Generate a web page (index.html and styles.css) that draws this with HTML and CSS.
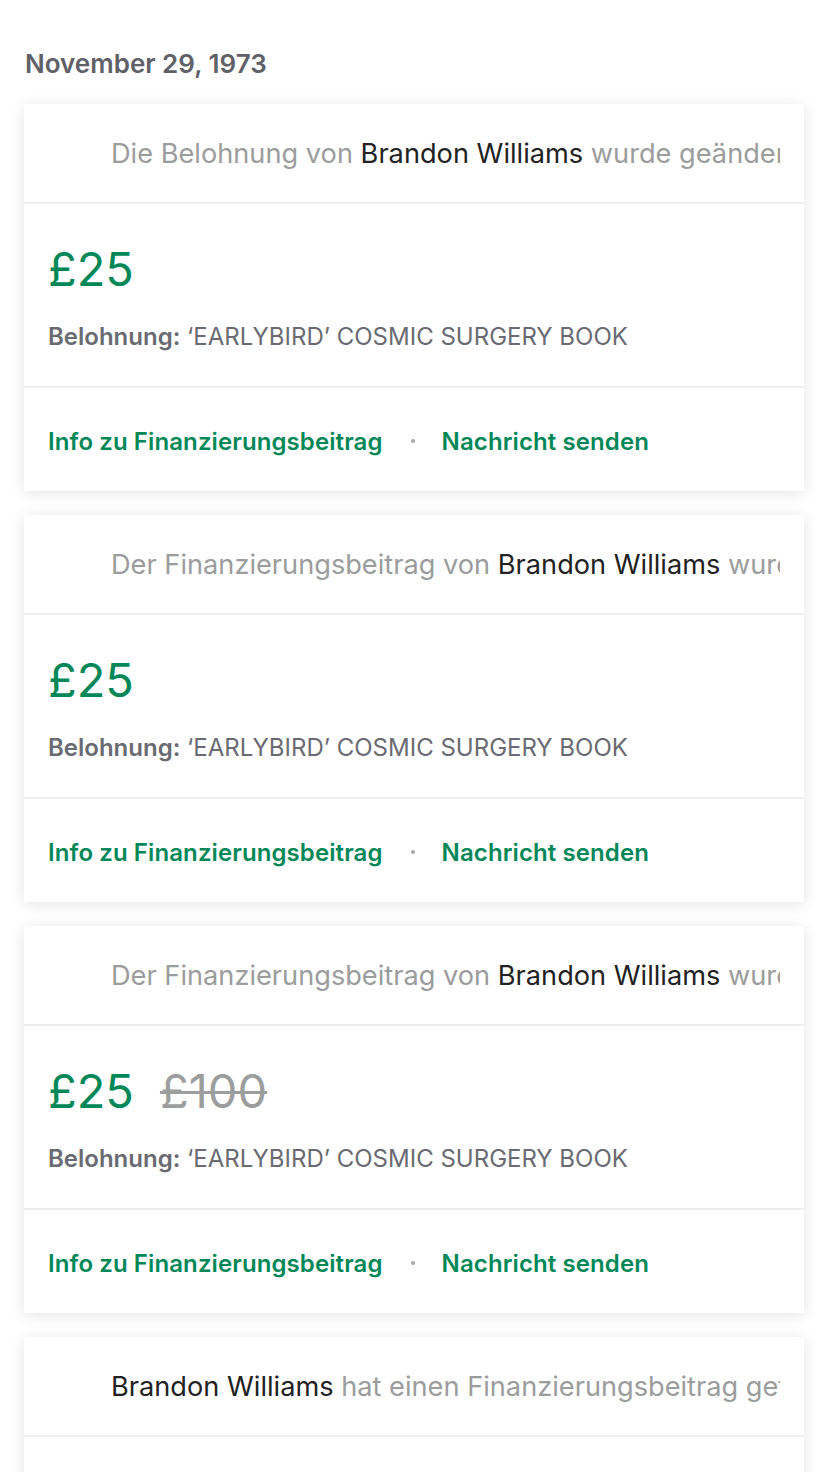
FILE: index.html
```html
<!DOCTYPE html>
<html lang="de">
<head>
<meta charset="utf-8">
<title>Aktivität</title>
<link rel="stylesheet" href="styles.css">
</head>
<body>
<main class="feed">
  <h2 class="date">November 29, 1973</h2>

  <section class="card">
    <div class="card-head"><p class="head-text"><span class="muted">Die Belohnung von </span><span class="name">Brandon Williams</span><span class="muted"> wurde geändert</span></p></div>
    <div class="card-body">
      <div class="amounts"><span class="amount">£25</span></div>
      <p class="reward"><b>Belohnung:</b> ‘EARLYBIRD’ COSMIC SURGERY BOOK</p>
    </div>
    <div class="card-foot"><a class="link">Info zu Finanzierungsbeitrag</a><span class="dot"></span><a class="link">Nachricht senden</a></div>
  </section>

  <section class="card">
    <div class="card-head"><p class="head-text"><span class="muted">Der Finanzierungsbeitrag von </span><span class="name">Brandon Williams</span><span class="muted"> wurde geändert</span></p></div>
    <div class="card-body">
      <div class="amounts"><span class="amount">£25</span></div>
      <p class="reward"><b>Belohnung:</b> ‘EARLYBIRD’ COSMIC SURGERY BOOK</p>
    </div>
    <div class="card-foot"><a class="link">Info zu Finanzierungsbeitrag</a><span class="dot"></span><a class="link">Nachricht senden</a></div>
  </section>

  <section class="card">
    <div class="card-head"><p class="head-text"><span class="muted">Der Finanzierungsbeitrag von </span><span class="name">Brandon Williams</span><span class="muted"> wurde geändert</span></p></div>
    <div class="card-body">
      <div class="amounts"><span class="amount">£25</span><s class="old">£100</s></div>
      <p class="reward"><b>Belohnung:</b> ‘EARLYBIRD’ COSMIC SURGERY BOOK</p>
    </div>
    <div class="card-foot"><a class="link">Info zu Finanzierungsbeitrag</a><span class="dot"></span><a class="link">Nachricht senden</a></div>
  </section>

  <section class="card">
    <div class="card-head"><p class="head-text"><span class="name">Brandon Williams</span><span class="muted"> hat einen Finanzierungsbeitrag getätigt</span></p></div>
    <div class="card-body">
      <div class="amounts"><span class="amount">£25</span></div>
      <p class="reward"><b>Belohnung:</b> ‘EARLYBIRD’ COSMIC SURGERY BOOK</p>
    </div>
  </section>
</main>
</body>
</html>
```
FILE: styles.css
```css
html, body {
  margin: 0;
  padding: 0;
  background: #ffffff;
}
body {
  font-family: Inter, "Noto Sans", "Liberation Sans", sans-serif;
  -webkit-font-smoothing: antialiased;
}
.feed {
  padding: 44px 24px 0;
  display: flex;
  flex-direction: column;
  gap: 24px;
}
.date {
  margin: 0 0 -4px 1px;
  font-size: 26px;
  line-height: 40px;
  font-weight: 600;
  color: #606168;
}
.card {
  background: #fff;
  box-shadow: 0 2px 14px rgba(0, 0, 0, 0.11);
}
.card-head {
  box-sizing: border-box;
  height: 100px;
  display: flex;
  align-items: center;
  padding: 2px 24px 0 87px;
  border-bottom: 2px solid #ededf2;
}
.head-text {
  margin: 0;
  flex: 1;
  min-width: 0;
  overflow: hidden;
  white-space: pre;
  font-size: 27.2px;
  line-height: 36px;
}
.muted { color: #9b9c9c; }
.name { color: #222222; }
.card-body {
  padding: 36px 24px 34px;
  border-bottom: 2px solid #ededf2;
}
.amounts {
  display: flex;
  align-items: baseline;
  gap: 26px;
  line-height: 58px;
}
.amount {
  font-size: 47px;
  color: #028858;
}
.old {
  font-size: 47px;
  color: #9c9e9e;
  text-decoration-thickness: 3px;
}
.reward {
  margin: 24px 0 0;
  font-size: 24px;
  line-height: 30px;
  color: #6a6b72;
}
.reward b { font-weight: 600; }
.card-foot {
  box-sizing: border-box;
  height: 103px;
  display: flex;
  align-items: center;
  padding: 3px 24px 0;
}
.link {
  font-size: 24px;
  font-weight: 600;
  color: #028858;
  letter-spacing: 0.1px;
}
.dot {
  width: 4px;
  height: 4px;
  border-radius: 50%;
  background: #a5a6a6;
  margin: 0 27px 0 28px;
}
```
